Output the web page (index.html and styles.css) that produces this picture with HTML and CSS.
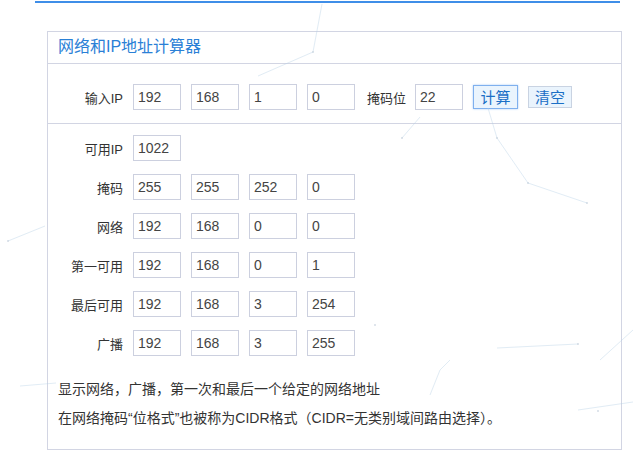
FILE: index.html
```html
<!DOCTYPE html>
<html lang="zh-CN">
<head>
    <meta charset="UTF-8">
    <meta name="viewport" content="width=device-width, initial-scale=1.0">
    <title>网络和IP地址计算器</title>
    <link rel="stylesheet" href="styles.css">
</head>
<body>
    <div class="top-strip"></div>

    <div class="calc">
        <div class="calc-title">网络和IP地址计算器</div>

        <div class="calc-input">
            <div class="row">
                <span class="lbl">输入IP</span>
                <input class="ip" type="text" value="192">
                <input class="ip" type="text" value="168">
                <input class="ip" type="text" value="1">
                <input class="ip" type="text" value="0">
                <span class="lbl-inline">掩码位</span>
                <input class="ip" type="text" value="22">
                <button class="btn btn-primary">计算</button>
                <button class="btn btn-clear">清空</button>
            </div>
        </div>

        <div class="calc-result">
            <div class="row">
                <span class="lbl">可用IP</span>
                <input class="ip" type="text" value="1022">
            </div>
            <div class="row">
                <span class="lbl">掩码</span>
                <input class="ip" type="text" value="255">
                <input class="ip" type="text" value="255">
                <input class="ip" type="text" value="252">
                <input class="ip" type="text" value="0">
            </div>
            <div class="row">
                <span class="lbl">网络</span>
                <input class="ip" type="text" value="192">
                <input class="ip" type="text" value="168">
                <input class="ip" type="text" value="0">
                <input class="ip" type="text" value="0">
            </div>
            <div class="row">
                <span class="lbl">第一可用</span>
                <input class="ip" type="text" value="192">
                <input class="ip" type="text" value="168">
                <input class="ip" type="text" value="0">
                <input class="ip" type="text" value="1">
            </div>
            <div class="row">
                <span class="lbl">最后可用</span>
                <input class="ip" type="text" value="192">
                <input class="ip" type="text" value="168">
                <input class="ip" type="text" value="3">
                <input class="ip" type="text" value="254">
            </div>
            <div class="row">
                <span class="lbl">广播</span>
                <input class="ip" type="text" value="192">
                <input class="ip" type="text" value="168">
                <input class="ip" type="text" value="3">
                <input class="ip" type="text" value="255">
            </div>
        </div>

        <div class="calc-notes">
            <p>显示网络，广播，第一次和最后一个给定的网络地址</p>
            <p>在网络掩码“位格式”也被称为CIDR格式（CIDR=无类别域间路由选择）。</p>
        </div>
    </div>

    <!-- faint particle lines in the page background -->
    <svg class="bg-lines" width="633" height="460" viewBox="0 0 633 460">
        <g stroke="#b5d0e6" stroke-width="1" fill="none" opacity="0.4">
            <polyline points="322,4 313,52 258,76"/>
            <polyline points="420,117 402,138"/>
            <polyline points="488,108 497,138 528,183 587,203"/>
            <polyline points="8,241 45,226"/>
            <polyline points="20,386 56,383"/>
            <polyline points="497,348 578,344"/>
            <polyline points="578,410 633,402"/>
            <polyline points="430,395 440,370 450,360"/>
            <polyline points="600,360 633,330"/>
        </g>
        <g fill="#c3cfdb" opacity="0.7">
            <circle cx="313" cy="52" r="1"/>
            <circle cx="402" cy="138" r="1"/>
            <circle cx="497" cy="138" r="1"/>
            <circle cx="528" cy="183" r="1"/>
            <circle cx="587" cy="203" r="1"/>
            <circle cx="8" cy="241" r="1"/>
            <circle cx="375" cy="325" r="1"/>
            <circle cx="578" cy="344" r="1"/>
            <circle cx="598" cy="411" r="1"/>
        </g>
    </svg>
</body>
</html>
```

FILE: styles.css
```css
body {
    margin: 0;
    height: 460px;
    overflow: hidden;
    position: relative;
    background-color: #fff;
    color: #333;
    font-family: "Liberation Sans", "Noto Sans CJK SC", sans-serif;
    font-size: 13px;
}

.top-strip {
    margin-left: 35px;
    width: 585px;
    height: 1px;
    border-bottom: 2px solid #3f8ee8;
}

.calc {
    margin: 28px 0 0 47px;
    width: 573px;
    border: 1px solid #d2d5e3;
}

.calc-title {
    height: 31px;
    line-height: 30px;
    padding-left: 10px;
    font-size: 16px;
    color: #2a80d6;
    border-bottom: 1px solid #d2d5e3;
}

.calc-input {
    padding: 20px 0 13px;
    border-bottom: 1px solid #d2d5e3;
}

.calc-result {
    padding-top: 11px;
    display: flex;
    flex-direction: column;
    gap: 13px;
}

.row {
    display: flex;
    align-items: center;
}

.lbl {
    width: 75px;
    margin-right: 10px;
    text-align: right;
}

.lbl-inline {
    margin: 0 9px 0 2px;
}

.ip {
    width: 48px;
    height: 26px;
    box-sizing: border-box;
    margin: 0 10px 0 0;
    padding: 0 4px;
    border: 1px solid #ccd0df;
    border-radius: 0;
    outline: none;
    color: #444;
    font-family: "Liberation Sans", sans-serif;
    font-size: 14px;
    background: #fff;
}

.btn {
    height: 24px;
    box-sizing: border-box;
    padding: 0;
    margin-right: 10px;
    font-family: "Noto Sans CJK SC", sans-serif;
    font-size: 15px;
    line-height: 20px;
    color: #1b6fc6;
    background-color: #eaf4fd;
    cursor: pointer;
}

.btn-primary {
    width: 45px;
    border: 1px solid #7fb0ee;
    box-shadow: 0 0 2px #a9cbf4;
}

.btn-clear {
    width: 44px;
    height: 22px;
    border: 1px solid #c9d3e2;
}

.calc-notes {
    padding: 19px 10px 16px;
    font-size: 14px;
    line-height: 29px;
}

.calc-notes p {
    margin: 0;
}

.bg-lines {
    position: absolute;
    top: 0;
    left: 0;
    pointer-events: none;
}
```
